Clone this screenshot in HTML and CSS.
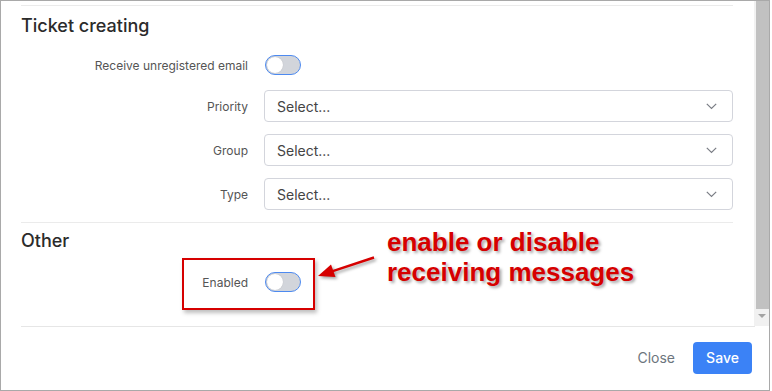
FILE: index.html
```html
<!DOCTYPE html>
<html>
<head>
    <title>Mail settings</title>
    <meta name="viewport" content="width=device-width, initial-scale=1">
    <link rel="stylesheet" href="styles.css">
</head>
<body>
    <div class="modal">
        <div class="modal-body">
            <div class="modal-content">
                <div class="section-prev"></div>

                <div class="section">
                    <h2 class="section-title">Ticket creating</h2>
                    <div class="form-row form-row-toggle">
                        <label class="form-label">Receive unregistered email</label>
                        <span class="toggle"><span class="toggle-knob"></span></span>
                    </div>
                    <div class="form-row">
                        <label class="form-label">Priority</label>
                        <div class="select">
                            <span>Select...</span>
                            <svg class="chevron" width="11" height="7" viewBox="0 0 11 7"><path d="M0.8 0.8 L5.5 5.5 L10.2 0.8" fill="none" stroke="#7a7d85" stroke-width="1.2"/></svg>
                        </div>
                    </div>
                    <div class="form-row">
                        <label class="form-label">Group</label>
                        <div class="select">
                            <span>Select...</span>
                            <svg class="chevron" width="11" height="7" viewBox="0 0 11 7"><path d="M0.8 0.8 L5.5 5.5 L10.2 0.8" fill="none" stroke="#7a7d85" stroke-width="1.2"/></svg>
                        </div>
                    </div>
                    <div class="form-row">
                        <label class="form-label">Type</label>
                        <div class="select">
                            <span>Select...</span>
                            <svg class="chevron" width="11" height="7" viewBox="0 0 11 7"><path d="M0.8 0.8 L5.5 5.5 L10.2 0.8" fill="none" stroke="#7a7d85" stroke-width="1.2"/></svg>
                        </div>
                    </div>
                </div>

                <div class="section section-other">
                    <h2 class="section-title">Other</h2>
                    <div class="form-row form-row-toggle">
                        <label class="form-label">Enabled</label>
                        <span class="toggle"><span class="toggle-knob"></span></span>
                    </div>
                </div>
            </div>
            <div class="scrollbar">
                <div class="scroll-thumb"></div>
                <div class="scroll-arrow"></div>
            </div>
        </div>

        <div class="modal-footer">
            <button class="btn-close">Close</button>
            <button class="btn-save">Save</button>
        </div>

        <!-- annotation over the screenshot -->
        <div class="note-box"></div>
        <svg class="note-arrow" width="70" height="40" viewBox="310 250 70 40">
            <line x1="374" y1="257.5" x2="332" y2="271.3" stroke="#d60000" stroke-width="2.4"/>
            <polygon points="318,276 335.5,277 331,264.5" fill="#d60000"/>
        </svg>
        <div class="note-text">enable or disable<br>receiving messages</div>
    </div>
</body>
</html>
```

FILE: styles.css
```css
html, body {
    margin: 0;
    padding: 0;
    background: #fff;
}
body {
    font-family: 'Inter', 'Noto Sans', Arial, sans-serif;
}
.modal {
    position: relative;
    width: 770px;
    height: 391px;
    box-sizing: border-box;
    border: 1px solid #a9a9a9;
    display: flex;
    flex-direction: column;
    background: #fff;
}
.modal-body {
    height: 325px;
    display: flex;
    overflow: hidden;
}
.modal-content {
    flex: 1;
    padding: 0 21px 0 20px;
}
.section-prev {
    height: 4px;
    border-bottom: 1px solid #ebebeb;
}
.section {
    padding-top: 9px;
    border-bottom: 1px solid #ebebeb;
}
.section-other {
    padding-top: 7px;
    border-bottom: none;
}
.section-title {
    margin: 0 0 15px 0;
    font-size: 18px;
    line-height: 22px;
    font-weight: 500;
    color: #2b2b2b;
}
.section-other .section-title {
    margin-bottom: 17px;
}
.form-row {
    display: grid;
    grid-template-columns: 227px 1fr;
    column-gap: 16px;
    align-items: center;
    height: 32px;
    margin-bottom: 12px;
}
.form-row-toggle {
    height: 26px;
}
.form-label {
    text-align: right;
    font-size: 12px;
    color: #555;
}
.toggle {
    display: inline-flex;
    align-items: center;
    width: 36px;
    height: 20px;
    box-sizing: border-box;
    margin-left: 1px;
    border: 1.5px solid #4d8af0;
    border-radius: 10px;
    background: #d2d5db;
}
.toggle-knob {
    width: 16px;
    height: 16px;
    margin-left: 0.5px;
    border-radius: 50%;
    background: #fff;
    box-shadow: 0 0 1px #00000033;
}
.select {
    display: flex;
    align-items: center;
    justify-content: space-between;
    height: 32px;
    box-sizing: border-box;
    padding: 0 15px 0 12px;
    border: 1px solid #d3d5dc;
    border-radius: 4px;
    font-size: 14px;
    color: #444;
}
.scrollbar {
    width: 15px;
    background: #f1f1f1;
    display: flex;
    flex-direction: column;
    align-items: flex-end;
}
.scroll-thumb {
    width: 13px;
    height: 308px;
    background: #c1c1c1;
}
.scroll-arrow {
    width: 0;
    height: 0;
    margin: 5px 3px 0 0;
    border-left: 4px solid transparent;
    border-right: 4px solid transparent;
    border-top: 4px solid #a3a3a3;
}
.modal-footer {
    flex: 1;
    display: flex;
    align-items: center;
    justify-content: flex-end;
    margin: 0 14px 0 20px;
    padding: 0 3px 2px 0;
    border-top: 1px solid #e6e6e6;
}
.btn-close {
    background: none;
    border: none;
    padding: 0;
    margin-right: 18px;
    font-family: inherit;
    font-size: 14px;
    color: #6c757d;
}
.btn-save {
    width: 59px;
    height: 32px;
    background: #3b82f6;
    border: none;
    border-radius: 4px;
    font-family: inherit;
    font-size: 14px;
    font-weight: 500;
    color: #fff;
}
.note-box {
    position: absolute;
    left: 181px;
    top: 257px;
    width: 133px;
    height: 52px;
    box-sizing: border-box;
    border: 2px solid #d60000;
    box-shadow: 2px 3px 4px #00000040;
}
.note-arrow {
    position: absolute;
    left: 309px;
    top: 249px;
    filter: drop-shadow(2px 2px 1.5px rgba(0, 0, 0, 0.35));
}
.note-text {
    position: absolute;
    left: 386px;
    top: 226px;
    font-family: 'Liberation Sans', Arial, sans-serif;
    font-size: 26px;
    line-height: 30px;
    font-weight: bold;
    color: #d60000;
    text-shadow: 2px 2px 3px rgba(0, 0, 0, 0.35);
}
```
